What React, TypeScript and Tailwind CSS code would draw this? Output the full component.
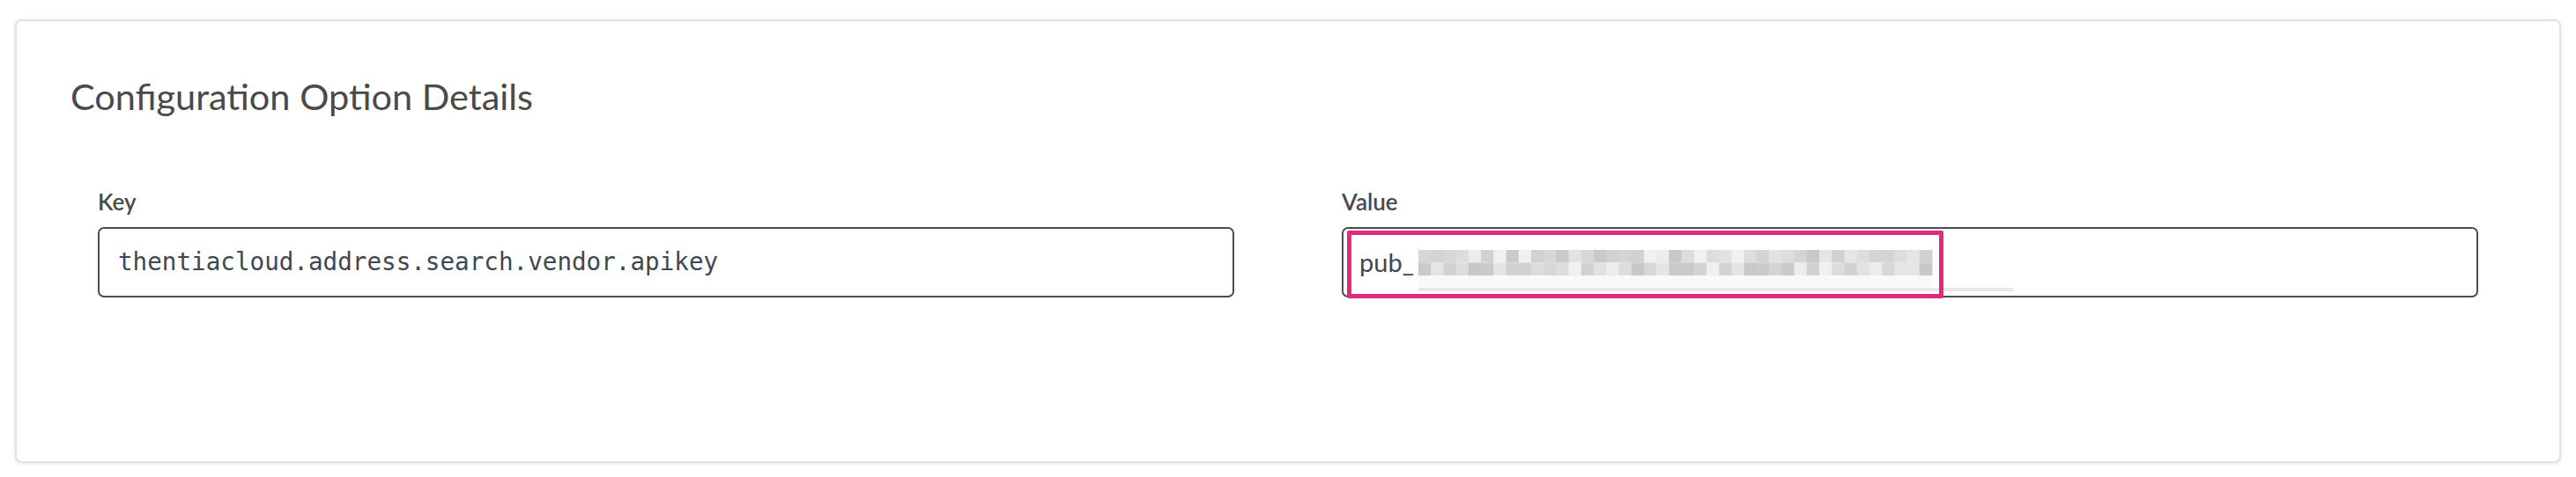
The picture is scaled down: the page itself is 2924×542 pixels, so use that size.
import React from "react"

const shades = ["#d6d7d9", "#c9cacc", "#e4e5e6", "#ececec", "#d0d1d3", "#dcdddf", "#f0f0f0", "#c6c8ca", "#e1e2e3", "#d3d4d6"]

function Mosaic() {
  const cols = 41
  const cw = 583 / cols
  const cells: React.ReactNode[] = []
  for (let r = 0; r < 2; r++) {
    for (let c = 0; c < cols; c++) {
      const n = Math.abs(Math.sin(c * 12.9898 + r * 78.233) * 43758.5453)
      const i = Math.floor((n - Math.floor(n)) * shades.length)
      cells.push(
        <rect key={`${r}-${c}`} x={c * cw} y={r * 14.5} width={cw + 0.5} height={14.5} fill={shades[i]} />
      )
    }
  }
  return (
    <svg width="675" height="47" viewBox="0 0 675 47" className="block">
      {cells}
      <rect x="0" y="29" width="583" height="14" fill="#f9f9f9" />
      <rect x="0" y="43" width="675" height="4" fill="#e8e8e8" />
    </svg>
  )
}

export default function App() {
  return (
    <div className="min-h-[542px] bg-white px-[17px] pt-[22px]" style={{ fontFamily: "Lato, 'Noto Sans', sans-serif" }}>
      <div className="h-[504px] rounded-[8px] border-2 border-[#e1e1e1] bg-white shadow-[0_1px_4px_rgba(0,0,0,0.12)]">
        <h2 className="pl-[61px] pt-[61px] text-[41.5px] leading-[48px] font-normal text-[#4a4a4a]">
          Configuration Option Details
        </h2>
        <div className="mt-[81px] grid grid-cols-2 gap-x-[122px] px-[92px]">
          <div>
            <label className="block text-[26px] leading-[31px] font-semibold text-[#4a4a4a]">Key</label>
            <div className="mt-[13px] flex h-[80px] items-center rounded-[7px] border-2 border-[#4d4d4d] pl-[21px]">
              <span
                className="text-[27.6px] text-[#3f4750]"
                style={{ fontFamily: "'DejaVu Sans Mono', monospace" }}
              >
                thentiacloud.address.search.vendor.apikey
              </span>
            </div>
          </div>
          <div>
            <label className="block text-[26px] leading-[31px] font-semibold text-[#4a4a4a]">Value</label>
            <div className="relative mt-[13px] flex h-[80px] items-center rounded-[7px] border-2 border-[#4d4d4d] pl-[18px]">
              <span className="text-[29px] text-[#3f4750]">pub_</span>
              <div className="absolute left-[85px] top-[24px]">
                <Mosaic />
              </div>
              <div className="absolute left-[4px] top-[2px] h-[77px] w-[677px] rounded-[2px] border-[5px] border-[#e3297f]" />
            </div>
          </div>
        </div>
      </div>
    </div>
  )
}
